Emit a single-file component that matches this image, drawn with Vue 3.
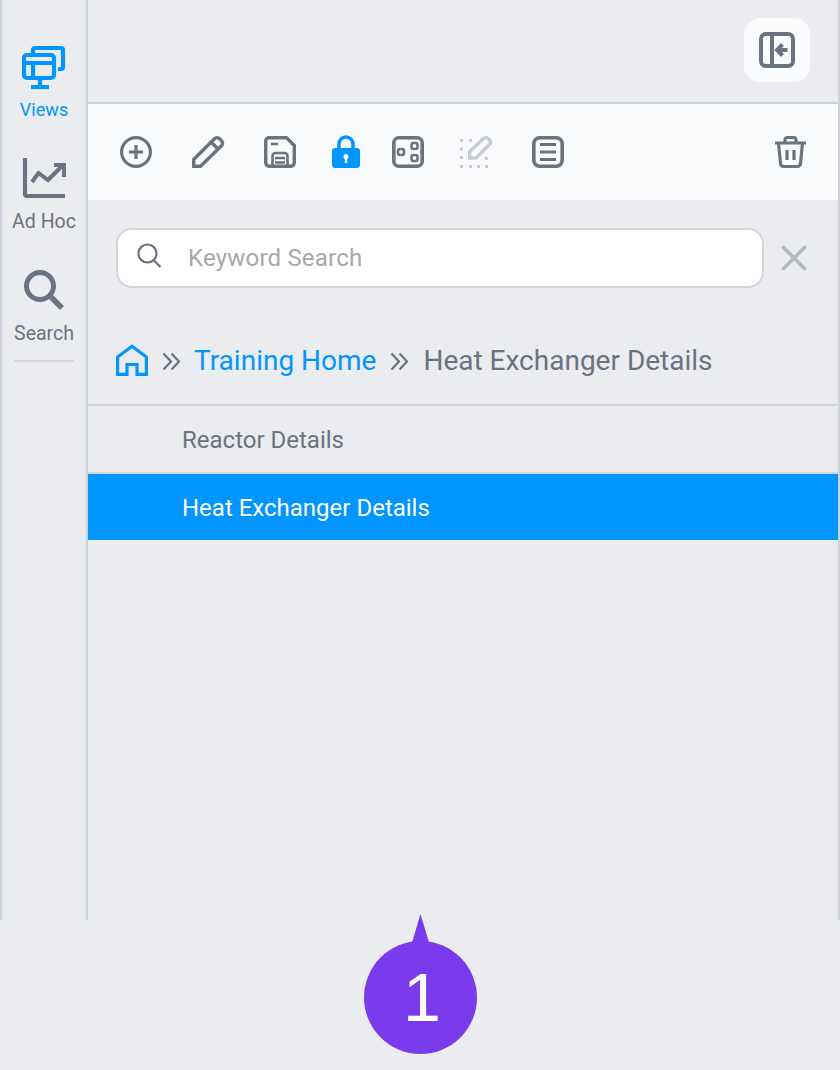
<script setup>
// Views side panel: rail on the left, toolbar, search, breadcrumb and view list.
const views = [
  { name: 'Reactor Details', active: false },
  { name: 'Heat Exchanger Details', active: true },
];
</script>

<template>
  <div class="page">
    <div class="app">
      <nav class="rail">
        <a class="rail-item rail-item--views">
          <svg width="44" height="44" viewBox="0 0 44 44" fill="none" stroke="currentColor" stroke-width="4.200">
            <path d="M11 8V5A2 2 0 0 1 13 3H39A2 2 0 0 1 41 5V22A2 2 0 0 1 39 24H36" />
            <rect x="2" y="10" width="30" height="23" rx="3" />
            <path d="M2 18H32M11 18V33M18 33V42M9 42H27" />
          </svg>
          <span>Views</span>
        </a>
        <a class="rail-item rail-item--adhoc">
          <svg width="44" height="44" viewBox="0 0 44 44" fill="none" stroke="currentColor" stroke-width="4.200">
            <path d="M3 1V37A2 2 0 0 0 5 39H43" />
            <path d="M10 25L16.500 16L26 23L41 8M32 8H42V20" stroke-width="4" />
          </svg>
          <span>Ad Hoc</span>
        </a>
        <a class="rail-item rail-item--search">
          <svg width="44" height="44" viewBox="0 0 44 44" fill="none" stroke="currentColor">
            <circle cx="18" cy="17" r="13.500" stroke-width="5" />
            <path d="M29 28L40 39" stroke-width="5.500" />
          </svg>
          <span>Search</span>
        </a>
        <div class="rail-rule"></div>
      </nav>

      <main class="panel">
        <header class="top">
          <button class="collapse">
            <svg width="36" height="36" viewBox="0 0 36 36" fill="none" stroke="currentColor" stroke-width="4">
              <rect x="2" y="2" width="32" height="32" rx="5" />
              <path d="M13 2V34M28.500 18H19M23.500 12.500L18 18L23.500 23.500" />
            </svg>
          </button>
        </header>

        <div class="toolbar">
          <svg class="tool tool--add" width="34" height="34" viewBox="0 0 34 34" fill="none" stroke="currentColor" stroke-width="3.200">
            <circle cx="17" cy="17" r="14.400" />
            <path d="M17 10V24M10 17H24" />
          </svg>
          <svg class="tool tool--edit" width="34" height="34" viewBox="0 0 34 34" fill="none" stroke="currentColor" stroke-width="3.400">
            <path d="M2.700 31.300V24.500L23.500 3.700A3.500 3.500 0 0 1 28.500 3.700L30.500 5.700A3.500 3.500 0 0 1 30.500 10.700L9.500 31.300ZM20.500 7.500L26.500 13.500" />
          </svg>
          <svg class="tool tool--save" width="34" height="34" viewBox="0 0 34 34" fill="none" stroke="currentColor" stroke-width="3.400">
            <path d="M6 2.700H23.500L31.300 10.500V27.500A3.800 3.800 0 0 1 27.500 31.300H6.500A3.800 3.800 0 0 1 2.700 27.500V6A3.300 3.300 0 0 1 6 2.700Z" />
            <path d="M8 9H15" stroke-width="2.600" />
            <path d="M9.500 32V21A3 3 0 0 1 12.500 18H21.500A3 3 0 0 1 24.500 21V32M12 23H22M12 27.500H22" stroke-width="2.600" />
          </svg>
          <svg class="tool tool--lock" width="30" height="34" viewBox="0 0 30 34">
            <path d="M8 15V9A7 7 0 0 1 22 9V15" fill="none" stroke="currentColor" stroke-width="3.500" />
            <rect x="1" y="13" width="28" height="20" rx="3" fill="currentColor" />
            <circle cx="15" cy="21.500" r="2.500" fill="#fff" />
            <rect x="13.800" y="22" width="2.400" height="6" fill="#fff" />
          </svg>
          <svg class="tool tool--layout" width="34" height="34" viewBox="0 0 34 34" fill="none" stroke="currentColor">
            <rect x="2.800" y="2.800" width="28.400" height="28.400" rx="5" stroke-width="3.600" />
            <rect x="7" y="14" width="6" height="6" rx="2" stroke-width="2.500" />
            <rect x="20.500" y="8" width="6" height="6" rx="2" stroke-width="2.500" />
            <rect x="20.500" y="20" width="6" height="6" rx="2" stroke-width="2.500" />
          </svg>
          <svg class="tool tool--rename" width="34" height="34" viewBox="0 0 34 34" fill="none" stroke="currentColor" stroke-width="3.400">
            <path d="M10.700 23V16.500L24.500 3.500A3 3 0 0 1 29 3.500L30.500 5A3 3 0 0 1 30.500 9.500L17 23Z" />
            <path d="M1 5.500H4M10 5.500H13M1 14H4M1 22.500H4M1 31.500H4M10 31.500H13M18 31.500H21M26 31.500H29M26 23.500H29" stroke-width="3" />
          </svg>
          <svg class="tool tool--list" width="34" height="34" viewBox="0 0 34 34" fill="none" stroke="currentColor" stroke-width="3.600">
            <rect x="2.800" y="2.800" width="28.400" height="28.400" rx="6" />
            <path d="M9 9.500H25M9 17H25M9 24.500H25" stroke-width="3" />
          </svg>
          <svg class="tool tool--trash" width="32" height="34" viewBox="0 0 32 34" fill="none" stroke="currentColor" stroke-width="3.200">
            <path d="M0 8H31M10 7V4.500A2.500 2.500 0 0 1 12.500 2.500H18.500A2.500 2.500 0 0 1 21 4.500V7" />
            <path d="M3.500 8L5.500 28.500A3 3 0 0 0 8.500 31.500H22.500A3 3 0 0 0 25.500 28.500L27.500 8" />
            <path d="M12 15V25M19 15V25" />
          </svg>
        </div>

        <div class="search-row">
          <div class="search">
            <svg width="26" height="26" viewBox="0 0 26 26" fill="none" stroke="#6b7280" stroke-width="2.200">
              <circle cx="10.500" cy="10.500" r="9" />
              <path d="M17 17.500L23.500 24" />
            </svg>
            <span class="placeholder">Keyword Search</span>
          </div>
          <svg class="clear" width="26" height="26" viewBox="0 0 26 26" fill="none" stroke="#b4b9c0" stroke-width="3.600" stroke-linecap="round">
            <path d="M2.500 2.500L23.500 23.500M23.500 2.500L2.500 23.500" />
          </svg>
        </div>

        <div class="crumbs">
          <svg class="home" width="32" height="32" viewBox="0 0 32 32" fill="none" stroke="#0095ff" stroke-width="3.200">
            <path d="M1.600 32V13L16 2.200L30.400 13V30.400H21V20.500H11V30.400H1.600" />
          </svg>
          <svg class="sep" width="19" height="19" viewBox="0 0 19 19" fill="none" stroke="#6b7280" stroke-width="2.200">
            <path d="M1.500 1.500L9 9.500L1.500 17.500M9.500 1.500L17 9.500L9.500 17.500" />
          </svg>
          <a class="crumb-link">Training Home</a>
          <svg class="sep" width="19" height="19" viewBox="0 0 19 19" fill="none" stroke="#6b7280" stroke-width="2.200">
            <path d="M1.500 1.500L9 9.500L1.500 17.500M9.500 1.500L17 9.500L9.500 17.500" />
          </svg>
          <span class="crumb-current">Heat Exchanger Details</span>
        </div>

        <ul class="views">
          <li v-for="v in views" :key="v.name" :class="{ active: v.active }">{{ v.name }}</li>
        </ul>
      </main>
    </div>

    <div class="marker">
      <span class="marker-tip"></span>
      <span class="marker-dot">1</span>
    </div>
  </div>
</template>

<style>
html, body { background: #ebecf0; }
</style>

<style scoped>
.page {
  position: relative;
  width: 840px;
  height: 1070px;
  background: #ebecf0;
  font-family: Roboto, "Liberation Sans", sans-serif;
  overflow: hidden;
}

.app {
  display: flex;
  height: 920px;
  box-sizing: border-box;
  border-left: 2px solid #cdd3dc;
  border-right: 2px solid #cdd3dc;
}

.rail {
  width: 84px;
  flex: none;
  border-right: 2px solid #cdd3dc;
  display: flex;
  flex-direction: column;
  align-items: center;
  padding-top: 45px;
  color: #6b7280;
}

.rail-item {
  display: flex;
  flex-direction: column;
  align-items: center;
  font-size: 19.500px;
  line-height: 21px;
}
.rail-item svg { display: block; }
.rail-item--views { color: #0095ff; height: 112px; font-size: 18px; letter-spacing: 0.100px; }
.rail-item--views span { margin-top: 10px; }
.rail-item--adhoc { height: 112px; }
.rail-item--adhoc span { margin-top: 10px; }
.rail-item--search { height: 91px; }
.rail-item--search span { margin-top: 10px; }

.rail-rule {
  width: 60px;
  height: 2px;
  background: #d4d8de;
}

.panel {
  flex: 1;
  min-width: 0;
}

.top {
  height: 84px;
  border-bottom: 2px solid #cdd3dc;
  display: flex;
  justify-content: flex-end;
  padding: 18px 28px 0 0;
}

.collapse {
  width: 66px;
  height: 64px;
  border: 0;
  padding: 0;
  border-radius: 16px;
  background: #f9fafc;
  color: #6b7280;
  display: flex;
  align-items: center;
  justify-content: center;
}

.toolbar {
  height: 96px;
  background: #f9fafc;
  display: flex;
  align-items: center;
  color: #6b7280;
}

.tool { flex: none; display: block; }
.tool--add { margin-left: 31px; }
.tool--edit { margin-left: 38px; }
.tool--save { margin-left: 38px; }
.tool--lock { margin-left: 34px; color: #0095ff; }
.tool--layout { margin-left: 30px; }
.tool--rename { margin-left: 34px; color: #c9ccd2; }
.tool--list { margin-left: 38px; }
.tool--trash { margin-left: auto; margin-right: 31px; }

.search-row {
  display: flex;
  align-items: center;
  padding: 28px 0 0 28px;
}

.search {
  width: 648px;
  height: 60px;
  box-sizing: border-box;
  background: #fff;
  border: 2px solid #d2d6df;
  border-radius: 16px;
  display: flex;
  align-items: center;
  padding-left: 19px;
}

.search svg { margin-top: -4px; }

.placeholder {
  margin-left: 25px;
  font-size: 24px;
  letter-spacing: 0.200px;
  color: #a8a8a8;
}

.clear { margin-left: 17px; }

.crumbs {
  display: flex;
  align-items: center;
  height: 60px;
  margin-top: 42px;
  padding-left: 28px;
  font-size: 28px;
  line-height: 34px;
  color: #6b7280;
}

.home { flex: none; }
.sep { flex: none; margin-left: 14px; margin-top: 2px; }
.crumb-link { color: #0095ff; margin-left: 13px; margin-top: 2px; }
.crumb-current { margin-left: 14px; margin-top: 2px; }

.views {
  list-style: none;
  margin: 14px 0 0;
  padding: 0;
  border-top: 2px solid #d2d6dc;
}

.views li {
  height: 66px;
  line-height: 68px;
  padding-left: 94px;
  font-size: 24px;
  color: #6b7280;
  border-bottom: 2px solid #d2d6dc;
}

.views li.active {
  background: #0095ff;
  color: #fff;
  border-bottom: 0;
}

.marker {
  position: absolute;
  left: 364px;
  top: 914px;
  width: 113px;
  height: 140px;
}

.marker-tip {
  position: absolute;
  left: 47px;
  top: 0;
  width: 19px;
  height: 32px;
  background: #7c3aed;
  clip-path: polygon(50% 0, 100% 100%, 0 100%);
}

.marker-dot {
  position: absolute;
  left: 0;
  top: 27px;
  width: 113px;
  height: 113px;
  border-radius: 50%;
  background: #7c3aed;
  color: #fff;
  font-family: "Liberation Sans", sans-serif;
  font-size: 68px;
  line-height: 113px;
  text-align: center;
  text-indent: 3px;
}
</style>
